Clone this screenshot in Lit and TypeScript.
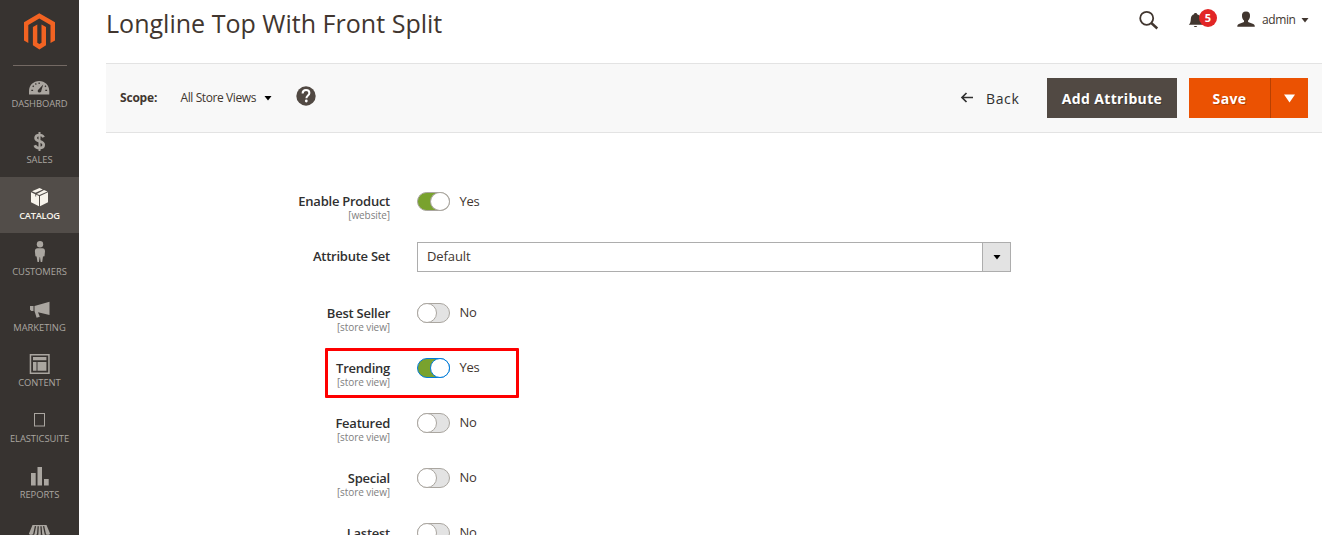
import { LitElement, html, css, svg } from "lit";
import { customElement, property } from "lit/decorators.js";

const icons: Record<string, unknown> = {
  dashboard: svg`<path fill-rule="evenodd" d="M2 21.500V18C2 12.200 6.500 8 12.200 8S22.300 12.200 22.300 18v3.500zM12.500 19.500c1.300 0 1.900-.8 1.900-2l1.800-6-4.700 5c-1.500 1.500-.6 3 1 3zM4.300 16.800h1.800v1.200H4.300zM18.300 16.800h1.800v1.200h-1.800zM5.200 13.300l1-1 1 .9-.9 1zM8 10.700l1-.7.7 1.300-1 .6zM11.500 9.500h1.300V11h-1.300zM17.500 13.300l.9-1.100 1 1-.9 1z"/>`,
  sales: svg`<g fill="none" stroke="currentColor"><path stroke-width="2.700" d="M16.600 8.200C15.800 6.500 14.400 6 12.600 6 10.300 6 8.600 7 8.600 9c0 4.400 8.100 2.100 8.100 6.800 0 2.200-1.800 3.300-4.200 3.300-2.200 0-4-.9-4.700-2.900"/><path stroke-width="2" d="M12.500 3v19"/></g>`,
  catalog: svg`<path d="M12.500 3l3.300 1.500-7.300 3.300L5 6.300zM17 5l3.500 1.500-8 3.600-2.800-1.200zM4 7.300l8 3.600v10.300L4 17.300zM21 7.300v10l-8 3.900V10.900z"/><path d="M8.700 7.900v3.600" fill="none" stroke="#524d49" stroke-width=".8"/>`,
  customers: svg`<circle cx="13" cy="3.300" r="3.200"/><path d="M10.500 7.200h5c1.500 0 2.500 1 2.500 3l-.5 5-1.500.2-.8 5.600h-1.500L13 16h-.3l-.8 5h-1.400l-.9-5.600-1.200-.2-.5-5c0-2 1-3 2.600-3z"/>`,
  marketing: svg`<path d="M22.500 4.700V18L11 15.200l1.800 4.500-3.200 1.100L7.500 14V9zM3 9h3.500v5H4.300L3 12.700z"/>`,
  content: svg`<path fill-rule="evenodd" d="M2.700 2h20v20h-20zM4.200 3.500v17h17v-17zM6 5h13.400v3.200H6zM6 10h3.500v8.700H6zM10.500 10h8.900v8.700h-8.900z"/>`,
  elasticsuite: svg`<rect x="7.500" y="5.500" width="10" height="12.500" fill="none" stroke="currentColor"/>`,
  reports: svg`<path d="M4 9h4.700v12.500H4zM10.500 3H15v18.500h-4.500zM17 15h4.700v6.500H17z"/>`,
  stores: svg`<path d="M5.500 5h14l3.500 8.500c0 1.800-3.500 2-4.200.3-.8 1.700-3.500 1.700-4.200 0-.7 1.700-3.500 1.700-4.200 0-.8 1.700-3.500 1.700-4.200 0-.8 1.700-4.200 1.500-4.200-.3z"/><path fill="none" stroke="#373330" stroke-width="1.300" d="M8.500 6.200l-1.700 8M11.200 6.200l-.5 8M14 6.200l.5 8M16.600 6.200l1.700 8"/>`,
};

@customElement("admin-menu")
class AdminMenu extends LitElement {
  static styles = css`
    :host { display: flex; flex-direction: column; align-items: stretch; width: 79px; height: 535px; overflow: hidden; background: #373330; flex: none; }
    .brand { box-sizing: border-box; flex: none; height: 66px; margin: 0 12px 0 13px; padding-top: 13px; border-bottom: 1px solid #736963; }
    .brand svg { display: block; margin: 0 0 0 10px; }
    .items { margin-top: -1px; }
    .item { box-sizing: border-box; height: 56px; padding-top: 8px; display: flex; flex-direction: column; align-items: center; color: #aaa6a0; font-size: 9.400px; line-height: 14px; text-transform: uppercase; letter-spacing: -0.05px; white-space: nowrap; }
    .item.short { height: 55px; }
    .item.current { background: #524d49; color: #f7f3eb; font-weight: 600; letter-spacing: -0.35px; }
    .item svg { display: block; fill: currentColor; flex: none; }
    .item.last { height: 14px; }
  `;
  render() {
    const names = ["dashboard", "sales", "catalog", "customers", "marketing", "content", "elasticsuite", "reports", "stores"];
    return html`
      <div class="brand">
        <svg width="33" height="38" viewBox="0 0 33 38" fill="#f26322"><path d="M16.300 0.300L32 9.300V27.500l-4.500 2.500V12L16.300 5.400 5.300 12v18L1 27.500V9.300z"/><path d="M14.300 11.500v18.300l2.100 1.200 2.100-1.200V11.500l4.500 2.600v18.200l-6.600 4.200-6.500-4.200V14.100z"/></svg>
      </div>
      <div class="items">
      ${names.map((n) => html`<div class="item ${n === "catalog" ? "current" : ""} ${n === "marketing" ? "short" : ""} ${n === "stores" ? "last" : ""}">
        <svg width="25" height="24" viewBox="0 0 25 24">${icons[n]}</svg>${n === "stores" ? "" : html`<span>${n}</span>`}</div>`)}
      </div>
    `;
  }
}

@customElement("toggle-field")
class ToggleField extends LitElement {
  @property() label = "";
  @property() scope = "";
  @property({ type: Boolean }) on = false;
  @property({ type: Boolean }) active = false;
  @property({ type: Boolean }) first = false;
  static styles = css`
    :host { display: grid; grid-template-columns: 284px 33px auto; column-gap: 27px; align-items: start; justify-content: start; height: 55px; }
    .label { text-align: right; font-size: 13px; font-weight: 600; line-height: 18px; letter-spacing: -0.25px; color: #303030; white-space: nowrap; padding-top: 1px; }
    .label.first { padding-top: 0; }
    .scope { display: block; font-size: 10px; font-weight: 400; line-height: 12px; letter-spacing: -0.08px; color: #808080; margin-top: -1px; }
    .switch { box-sizing: border-box; width: 33px; height: 20px; border: 1px solid #aaa6a0; border-radius: 10px; background: #e3e3e3; display: flex; }
    .switch::before { content: ""; box-sizing: border-box; width: 20px; height: 20px; margin: -1px; border: 1px solid #aaa6a0; border-radius: 50%; background: #fff; }
    .switch.first, .switch.first::before { height: 19px; }
    .switch.on { background: #79a22e; justify-content: flex-end; }
    .switch.active, .switch.active::before { border-color: #007bdb; }
    .value { margin-left: -17.500px; font-size: 13px; line-height: 18px; letter-spacing: -0.25px; color: #41362f; }
  `;
  render() {
    const first = this.first ? "first" : "";
    return html`<div class="label ${first}">${this.label}<span class="scope">${this.scope}</span></div>
      <div class="switch ${first} ${this.on ? "on" : ""} ${this.active ? "active" : ""}"></div>
      <div class="value">${this.on ? "Yes" : "No"}</div>`;
  }
}

@customElement("app-root")
class AppRoot extends LitElement {
  static styles = css`
    :host { display: flex; width: 1339px; height: 535px; overflow: hidden; background: #fff; font-family: "Open Sans", sans-serif; color: #41362f; }
    .page { width: 1216px; margin-left: 27px; position: relative; }
    header { display: flex; height: 63px; align-items: flex-start; }
    h1 { margin: 4px auto 0 0; font-size: 25.050px; line-height: 38px; font-weight: 400; white-space: nowrap; }
    svg { display: block; flex: none; }
    .search { margin: 10px 29px 0 0; }
    .bell { margin: 8px 20px 0 0; width: 29px; height: 24px; display: flex; align-items: flex-start; }
    .bell svg { margin-top: 4px; }
    .count { width: 18px; height: 18px; margin: 1px 0 0 -5px; border-radius: 9px; background: #e22626; color: #fff; font-size: 11px; font-weight: 700; line-height: 18px; text-align: center; }
    .user { margin: 11px 7px 0 0; }
    .admin { margin-top: 11px; font-size: 12px; line-height: 18px; letter-spacing: -0.4px; width: 34px; }
    .admin-caret { margin: 18px 13px 0 5px; }
    .bar { box-sizing: border-box; height: 70px; background: #f8f8f8; border-top: 1px solid #e3e3e3; border-bottom: 1px solid #e3e3e3; display: flex; align-items: center; padding: 0 14px; }
    .scope-name { font-size: 12px; font-weight: 700; letter-spacing: -0.2px; width: 60.500px; margin-bottom: 2px; }
    .store { font-size: 12px; letter-spacing: -0.4px; white-space: nowrap; margin: 0 7px 2px 0; width: 76px; }
    .help { margin: -4px auto 0 24px; }
    .back { display: flex; align-items: center; font-size: 14px; letter-spacing: 0.65px; line-height: 20px; color: #303030; gap: 12px; margin-right: 27.500px; }
    .back span { margin-top: 2px; }
    .btn { height: 40px; line-height: 41px; color: #fff; font-size: 14px; font-weight: 700; letter-spacing: 0.35px; text-align: center; text-shadow: 1px 1px 0 rgba(0, 0, 0, 0.25); white-space: nowrap; }
    .add { width: 130px; background: #514943; margin-right: 12px; }
    .save { width: 81px; background: #eb5202; border-right: 1px solid #b84002; }
    .more { width: 37px; height: 40px; background: #eb5202; display: flex; align-items: center; justify-content: center; }
    .fields { padding-top: 59px; }
    .enable { height: 50px; }
    .select-row { display: grid; grid-template-columns: 284px 594px; column-gap: 27px; height: 61px; align-items: start; }
    .select-label { text-align: right; font-size: 13px; font-weight: 600; line-height: 18px; letter-spacing: -0.25px; padding-top: 5px; color: #303030; }
    .select { box-sizing: border-box; height: 30px; border: 1px solid #adadad; display: flex; font-size: 13px; line-height: 27px; letter-spacing: -0.1px; color: #41362f; }
    .select-text { flex: 1; padding-left: 9px; }
    .arrow { box-sizing: border-box; width: 28px; background: #e3e3e3; border-left: 1px solid #adadad; display: flex; align-items: center; justify-content: center; padding-top: 1px; }
    .highlight { position: absolute; left: 219px; top: 348px; width: 188px; height: 44px; border: 3px solid #fe0000; border-radius: 1px; }
  `;
  render() {
    return html`
      <admin-menu></admin-menu>
      <div class="page">
        <header>
          <h1>Longline Top With Front Split</h1>
          <svg class="search" width="21" height="20" viewBox="0 0 21 20" fill="none" stroke="#41362f"><circle cx="8.700" cy="8.300" r="6.500" stroke-width="1.800"/><path stroke-width="2.400" d="M13.300 13l6 5.500"/></svg>
          <div class="bell">
            <svg width="16" height="16" viewBox="0 0 16 16" fill="#41362f"><path d="M7.500 1c1 0 1.500.5 1.600 1.200 3.200.8 3.700 3.300 3.700 6l1.200 3.100 1 1.500H.8L2 11.300c.8-1.800.7-3.300.9-5 .2-2.200 1.300-3.500 3.100-4.100C6.100 1.500 6.600 1 7.500 1zM5.800 14h3.400c-.3 1.300-3.100 1.300-3.400 0z"/></svg>
            <div class="count">5</div>
          </div>
          <svg class="user" width="18" height="17" viewBox="0 0 18 17" fill="#41362f"><path d="M9 .5c3 0 4.300 1.800 4 4.800-.2 2-.8 3.400-1.900 4.300v1.500l5.200 1.900c1.100.4 1.500 1.200 1.500 2.800H.3c0-1.600.4-2.400 1.500-2.800L7 11.100V9.600C5.800 8.700 5.200 7.300 5 5.300 4.700 2.300 6 .5 9 .5z"/></svg>
          <span class="admin">admin</span>
          <svg class="admin-caret" width="8" height="5" viewBox="0 0 8 5" fill="#41362f"><path d="M0.500 0h7L4 4.500z"/></svg>
        </header>
        <div class="bar">
          <span class="scope-name">Scope:</span>
          <span class="store">All Store Views</span>
          <svg width="8" height="5" viewBox="0 0 8 5"><path d="M0.500 0h7L4 4.500z"/></svg>
          <svg class="help" width="20" height="20" viewBox="0 0 20 20"><circle cx="10" cy="10" r="9.700" fill="#514943"/><path d="M6.600 7.500C6.600 5.200 8 4 10 4s3.400 1.200 3.400 3c0 2.500-3 2.500-3 5.300" fill="none" stroke="#fff" stroke-width="2"/><circle cx="10.300" cy="15" r="1.400" fill="#fff"/></svg>
          <div class="back"><svg width="14" height="12" viewBox="0 0 14 12" fill="none" stroke="#303030" stroke-width="1.700"><path d="M13 5.500H2M6.500 1L2 5.500 6.500 10"/></svg><span>Back</span></div>
          <div class="btn add">Add Attribute</div>
          <div class="btn save">Save</div>
          <div class="more"><svg width="11" height="9" viewBox="0 0 11 9" fill="#fff"><path d="M0 0.500h11L5.500 8.500z"/></svg></div>
        </div>
        <div class="fields">
          <toggle-field class="enable" label="Enable Product" scope="[website]" on first></toggle-field>
          <div class="select-row"><div class="select-label">Attribute Set</div>
            <div class="select"><span class="select-text">Default</span><span class="arrow"><svg width="8" height="5" viewBox="0 0 8 5"><path d="M0.500 0h7L4 4.500z"/></svg></span></div></div>
          <toggle-field label="Best Seller" scope="[store view]"></toggle-field>
          <toggle-field label="Trending" scope="[store view]" on active></toggle-field>
          <toggle-field label="Featured" scope="[store view]"></toggle-field>
          <toggle-field label="Special" scope="[store view]"></toggle-field>
          <toggle-field label="Lastest"></toggle-field>
        </div>
        <div class="highlight"></div>
      </div>
    `;
  }
}
